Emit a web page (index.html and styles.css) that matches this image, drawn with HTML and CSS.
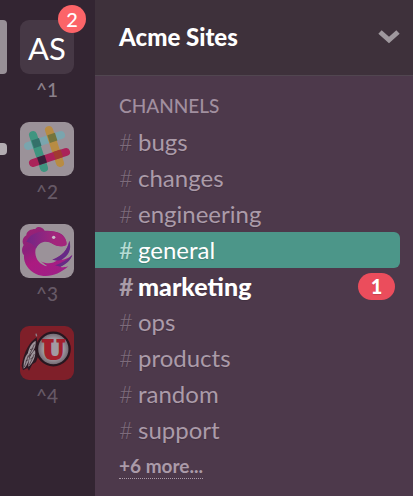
FILE: index.html
```html
<!DOCTYPE html>
<html lang="en">
<head>
    <meta charset="UTF-8">
    <meta name="viewport" content="width=device-width, initial-scale=1.0">
    <title>Acme Sites</title>
    <link rel="stylesheet" href="styles.css">
</head>
<body>
    <nav class="teams" aria-label="Teams">
        <a class="team active" href="#team1">
            <span class="icon initials">AS</span>
            <span class="team-badge">2</span>
            <span class="shortcut">^1</span>
        </a>
        <a class="team unread" href="#team2">
            <svg class="icon" viewBox="0 0 54 54">
                <rect width="54" height="54" fill="#9b9299"/>
                <g fill="none" stroke-width="8" stroke-linecap="round">
                    <path d="M8 24L41 13" stroke="#7aa5ae"/>
                    <path d="M29 8L40 41" stroke="#b88c43"/>
                    <path d="M13 13L24 46" stroke="#3f9580"/>
                    <path d="M13 41L46 30" stroke="#aa2259"/>
                </g>
                <path d="M11.5 18.6l7.5-2.5 2.5 7.6-7.5 2.5z" fill="#34706a"/>
                <path d="M27.4 13.3l7.5-2.5 2.5 7.6-7.5 2.5z" fill="#74743d"/>
                <path d="M17 35.4l7.5-2.5 2.5 7.6-7.5 2.5z" fill="#38213a"/>
                <path d="M33 30l7.5-2.5 2.5 7.6-7.5 2.5z" fill="#a13a31"/>
            </svg>
            <span class="shortcut">^2</span>
        </a>
        <a class="team" href="#team3">
            <svg class="icon" viewBox="0 0 162 162">
                <defs>
                    <linearGradient id="dragon" x1="0.2" y1="0" x2="0.8" y2="1">
                        <stop offset="0" stop-color="#9c2274"/>
                        <stop offset="0.3" stop-color="#8c207c"/>
                        <stop offset="0.55" stop-color="#ac1a80"/>
                        <stop offset="1" stop-color="#9c2088"/>
                    </linearGradient>
                    <linearGradient id="head" x1="0" y1="0" x2="1" y2="0">
                        <stop offset="0" stop-color="#702686"/>
                        <stop offset="0.7" stop-color="#a3257c"/>
                    </linearGradient>
                </defs>
                <rect width="162" height="162" fill="#9b9299"/>
                <path fill="url(#dragon)" d="M139 62C141 47 132 31 112 25C98 20 84 20 74 20C67 8 52 5 46 15C33 15 19 21 19 34C7 41 5 54 11 63C3 76 6 88 12 94C10 115 24 139 48 150C80 164 116 153 145 127C132 131 126 130 121 128C137 120 151 107 157 93C145 103 134 107 124 107C143 94 154 75 148 50C143 78 126 96 97 107L111 109C100 120 79 121 62 112L82 127C60 123 47 106 46 87C45 68 57 53 75 52C94 52 101 66 120 67C128 67 135 66 139 62Z"/>
                <path fill="url(#head)" d="M19 54C30 31 48 24 76 22C99 18 124 27 133 42C139 50 141 57 139 62C133 68 111 69 99 60C79 47 57 53 48 74C41 61 28 54 19 54Z"/>
                <path fill="#672a86" d="M148 50C156 76 145 97 124 107C111 112 104 108 97 107C126 96 142 79 148 50ZM157 93C151 109 139 121 121 128L105 124C124 118 144 106 157 93Z"/>
                <circle cx="101" cy="40" r="5" fill="#c8bcca"/>
            </svg>
            <span class="shortcut">^3</span>
        </a>
        <a class="team" href="#team4">
            <svg class="icon" viewBox="0 0 162 162">
                <defs>
                    <radialGradient id="drum">
                        <stop offset="0.6" stop-color="#a29ba2"/>
                        <stop offset="1" stop-color="#6b626b"/>
                    </radialGradient>
                </defs>
                <rect width="162" height="162" fill="#7f1f29"/>
                <path fill="#2d1923" d="M50 34C27 50 13 75 5 119L9 133L22 126L27 134L37 115L48 108L58 82Z"/>
                <path fill="#9d949b" d="M47 44C32 53 24 71 22 92C36 85 49 65 47 44ZM28 77C15 87 10 108 11 128C24 117 31 95 28 77ZM45 72C33 82 25 100 25 122C39 111 49 91 45 72Z"/>
                <path fill="none" stroke="#3a2831" stroke-width="2" d="M43 55L25 94M25 88L13 123M43 84L28 117M17 105l8-4M31 99l9-5M30 71l10-3"/>
                <path fill="none" stroke="#8c838a" stroke-width="4" d="M48 23l2 8"/>
                <circle cx="100" cy="69" r="49" fill="url(#drum)" stroke="#27161f" stroke-width="7"/>
                <text class="drum-letter" x="100" y="98">U</text>
            </svg>
            <span class="shortcut">^4</span>
        </a>
    </nav>

    <main class="sidebar">
        <header>
            <h1>Acme Sites</h1>
            <button class="menu" aria-label="Team menu">
                <svg width="24" height="16" viewBox="0 0 24 16">
                    <path d="M3 3L12 11L21 3" fill="none" stroke="#9f989e" stroke-width="5"/>
                </svg>
            </button>
        </header>
        <section>
            <h2>CHANNELS</h2>
            <ul>
                <li><a href="#bugs"><span class="hash">#</span>bugs</a></li>
                <li><a href="#changes"><span class="hash">#</span>changes</a></li>
                <li><a href="#engineering"><span class="hash">#</span>engineering</a></li>
                <li><a class="current" href="#general"><span class="hash">#</span>general</a></li>
                <li><a class="mention" href="#marketing"><span class="hash">#</span>marketing<span class="count">1</span></a></li>
                <li><a href="#ops"><span class="hash">#</span>ops</a></li>
                <li><a href="#products"><span class="hash">#</span>products</a></li>
                <li><a href="#random"><span class="hash">#</span>random</a></li>
                <li><a href="#support"><span class="hash">#</span>support</a></li>
            </ul>
            <a class="more" href="#more">+6 more...</a>
        </section>
    </main>
</body>
</html>
```
FILE: styles.css
```css
* {
    box-sizing: border-box;
}
body {
    margin: 0;
    min-height: 100vh;
    display: flex;
    font-family: Lato, sans-serif;
    background-color: #4d394b;
}
a {
    color: inherit;
    text-decoration: none;
}

/* team switcher */
.teams {
    flex: none;
    width: 95px;
    padding: 20px;
    background-color: #332532;
}
.team {
    position: relative;
    display: block;
    width: 54px;
    margin-bottom: 14px;
    color: #665966;
}
.icon {
    display: block;
    width: 54px;
    height: 54px;
    border-radius: 9px;
    overflow: hidden;
}
.initials {
    background-color: #463845;
    color: white;
    font-size: 31px;
    line-height: 56px;
    text-align: center;
}
.shortcut {
    display: block;
    padding: 1px 0 3px;
    font-size: 19px;
    font-weight: 500;
    line-height: 30px;
    text-align: center;
}
.active .shortcut {
    color: #8b808a;
}
.team-badge {
    position: absolute;
    top: -15px;
    right: -12px;
    width: 28px;
    height: 28px;
    border-radius: 50%;
    background-color: #fc6468;
    color: white;
    font-size: 20px;
    font-weight: 500;
    line-height: 28px;
    text-align: center;
}
.active::before,
.unread::before {
    content: "";
    position: absolute;
    left: -20px;
    top: 0;
    width: 7px;
    height: 54px;
    border-radius: 0 4px 4px 0;
    background-color: #989097;
}
.unread::before {
    top: 21px;
    height: 12px;
    background-color: #b3adb2;
}
.drum-letter {
    font-family: "DejaVu Serif", serif;
    font-size: 78px;
    font-weight: bold;
    text-anchor: middle;
    fill: #a3202c;
    stroke: #a3202c;
    stroke-width: 6px;
}

/* channel list */
.sidebar {
    flex: 1;
    min-width: 0;
}
header {
    display: flex;
    align-items: center;
    justify-content: space-between;
    height: 76px;
    padding: 0 12px 2px 24px;
    background-color: #3e313b;
    border-bottom: 1px solid #514650;
}
h1 {
    margin: 0;
    color: white;
    font-size: 24px;
    font-weight: 900;
    line-height: 36px;
}
.menu {
    display: flex;
    padding: 0;
    border: none;
    background: none;
    cursor: pointer;
}
h2 {
    margin: 0;
    padding: 18px 24px 6px;
    color: #a18f9f;
    font-size: 19px;
    font-weight: 500;
    line-height: 24px;
}
ul {
    margin: 0;
    padding: 0;
    list-style: none;
}
li a {
    display: flex;
    align-items: center;
    height: 36px;
    margin-right: 13px;
    padding: 0 5px 0 24px;
    border-radius: 0 6px 6px 0;
    color: #ab9ba9;
    font-size: 24px;
    line-height: 36px;
    text-shadow: 0 1px 1px rgba(0, 0, 0, 0.15);
}
.hash {
    width: 19px;
    color: #7d6b7b;
    font-weight: 300;
}
.current {
    background-color: #4c9689;
    color: white;
}
.current .hash {
    color: #b5dcd3;
    font-weight: normal;
}
.mention {
    color: white;
    font-size: 25px;
    font-weight: 900;
}
.mention .hash {
    color: #a99ca8;
    font-weight: bold;
}
.count {
    width: 37px;
    margin-left: auto;
    border-radius: 14px;
    background-color: #eb4d5c;
    font-size: 20px;
    line-height: 27px;
    text-align: center;
}
.more {
    display: inline-block;
    margin: 6px 24px 0;
    border-bottom: 1px dotted #ab9ba9;
    color: #ab9ba9;
    font-size: 19px;
    font-weight: bold;
    line-height: 24px;
}
```
